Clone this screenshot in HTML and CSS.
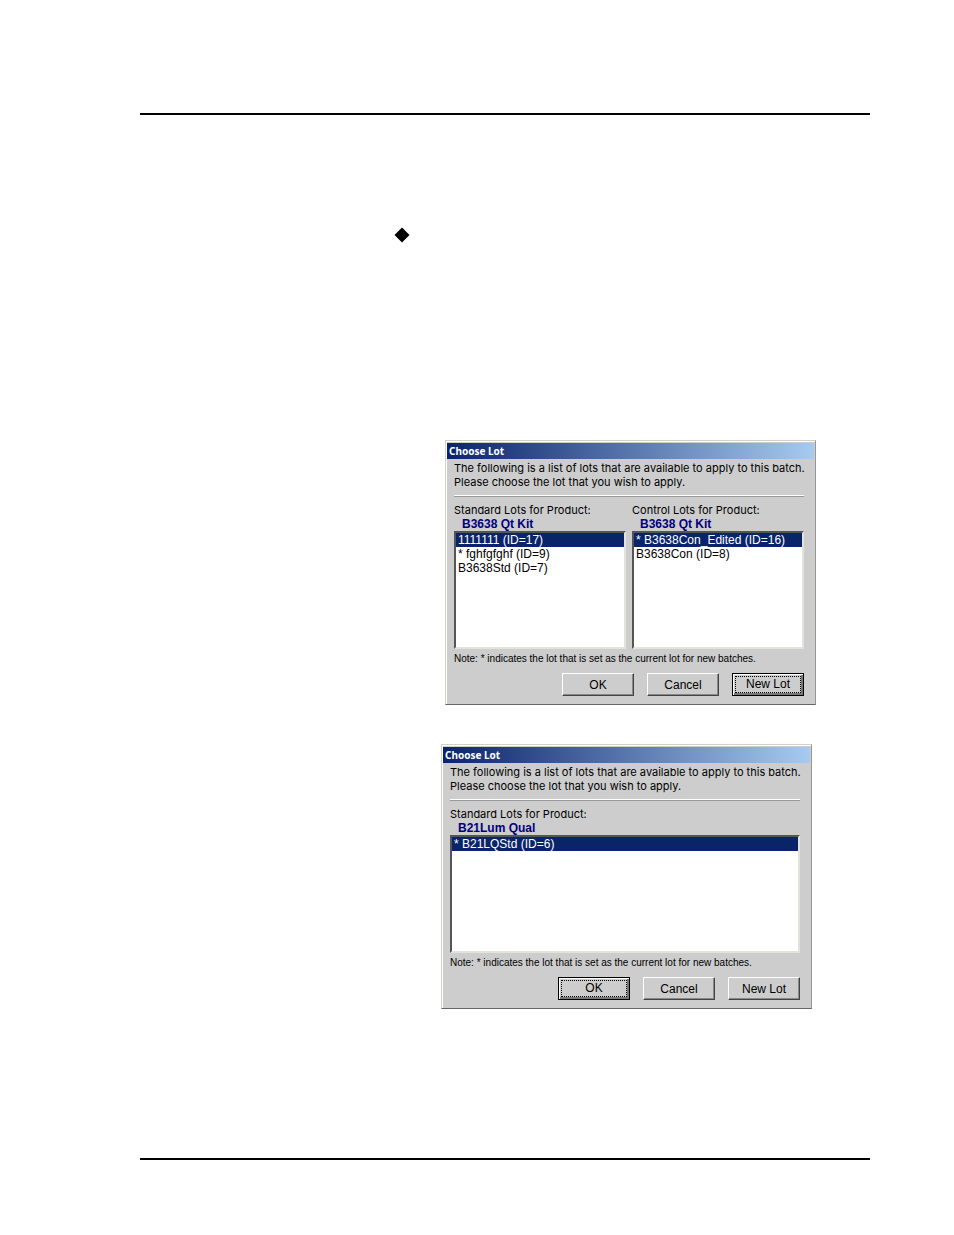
FILE: index.html
```
<!DOCTYPE html>
<html lang="en">
<head>
    <meta charset="UTF-8">
    <meta name="viewport" content="width=device-width, initial-scale=1.0">
    <title>Choose Lot</title>
    <link rel="stylesheet" href="styles.css">
</head>
<body>

<main class="page">
    <div class="bullet">
        <svg width="16" height="16" viewBox="0 0 16 16" aria-hidden="true">
            <path d="M8 0.5 L15.5 8 L8 15.5 L0.5 8 Z" fill="#000"/>
        </svg>
    </div>

    <section class="dialog">
        <h2 class="title">Choose Lot</h2>
        <div class="content">
            <p class="intro">The following is a list of lots that are available to apply to this batch.<br>Please choose the lot that you wish to apply.</p>
            <hr>
            <div class="lists">
                <div class="lot">
                    <label for="standard">Standard Lots for Product: <b>B3638 Qt Kit</b></label>
                    <select id="standard" size="8">
                        <option selected>1111111 (ID=17)</option>
                        <option>* fghfgfghf (ID=9)</option>
                        <option>B3638Std (ID=7)</option>
                    </select>
                </div>
                <div class="lot">
                    <label for="control">Control Lots for Product: <b>B3638 Qt Kit</b></label>
                    <select id="control" size="8">
                        <option selected>* B3638Con_Edited (ID=16)</option>
                        <option>B3638Con (ID=8)</option>
                    </select>
                </div>
            </div>
            <p class="note">Note: * indicates the lot that is set as the current lot for new batches.</p>
            <div class="buttons">
                <button type="button">OK</button>
                <button type="button">Cancel</button>
                <button type="button" class="default"><span>New Lot</span></button>
            </div>
        </div>
    </section>

    <section class="dialog second">
        <h2 class="title">Choose Lot</h2>
        <div class="content">
            <p class="intro">The following is a list of lots that are available to apply to this batch.<br>Please choose the lot that you wish to apply.</p>
            <hr>
            <div class="lists">
                <div class="lot">
                    <label for="qual">Standard Lots for Product: <b>B21Lum Qual</b></label>
                    <select id="qual" size="8">
                        <option selected>* B21LQStd (ID=6)</option>
                    </select>
                </div>
            </div>
            <p class="note">Note: * indicates the lot that is set as the current lot for new batches.</p>
            <div class="buttons">
                <button type="button" class="default"><span>OK</span></button>
                <button type="button">Cancel</button>
                <button type="button">New Lot</button>
            </div>
        </div>
    </section>
</main>

</body>
</html>
```

FILE: styles.css
```
* {
    box-sizing: border-box;
}
body {
    margin: 0;
    padding: 113px 84px 75px 140px;
    min-height: 100vh;
    display: flex;
    background: #fff;
    color: #000;
    font-family: "Liberation Sans", Arial, sans-serif;
    font-size: 12px;
    line-height: 14px;
}
.page {
    flex: 1;
    border-top: 2px solid #000;
    border-bottom: 2px solid #000;
    padding: 112px 54px 0 254px;
}
.bullet {
    height: 213px;
}
.bullet svg {
    display: block;
}
.dialog {
    width: 371px;
    max-width: 100%;
    margin-left: auto;
    padding: 1px;
    background: #cdcdcd;
    border: 1px solid;
    border-color: #d4d0c8 #99968f #666 #d4d0c8;
    box-shadow: inset 1px 1px 0 #fff;
}
.second {
    margin: 39px 4px 0 auto;
}
.title {
    margin: 1px 0 0;
    padding-left: 2px;
    height: 16px;
    background: linear-gradient(to right, #0a246a, #a6caf0);
    color: #fff;
    font: bold 10px/16px "Noto Sans", Tahoma, sans-serif;
}
.content {
    padding: 2px 10px 7px 7px;
}
p {
    margin: 0;
}
.intro,
label {
    font-family: Inter, Arial, sans-serif;
    font-size: 11px;
}
.intro {
    white-space: nowrap;
}
hr {
    height: 2px;
    margin: 6px 0;
    border: 0;
    border-top: 1px solid #fff;
    border-bottom: 1px solid #999;
}
.lists {
    display: flex;
    gap: 6px;
}
.lot {
    flex: 1;
    min-width: 0;
}
label,
label b {
    display: block;
}
label b {
    padding-left: 8px;
    color: #000080;
    font-family: "Liberation Sans", Arial, sans-serif;
    font-size: 12px;
}
select {
    display: block;
    width: 100%;
    height: 118px;
    padding: 0;
    background: #fff;
    border: 2px solid;
    border-color: #555 #e4e2dc #e4e2dc #555;
    border-radius: 0;
    outline: none;
    overflow: hidden;
    font: inherit;
    font-family: "Liberation Sans", Arial, sans-serif;
    color: #000;
}
option {
    height: 14px;
    min-height: 14px;
    padding: 0 2px;
    line-height: 14px;
    color: #000;
}
option:checked {
    background: #0a246a linear-gradient(#0a246a, #0a246a);
    color: #fff;
    -webkit-text-fill-color: #fff;
}
.note {
    padding: 3px 0 7px;
    font-size: 10px;
}
.buttons {
    display: flex;
    justify-content: flex-end;
    gap: 13px;
}
button {
    width: 72px;
    height: 23px;
    padding: 0;
    background: #cdcdcd;
    border: 1px solid;
    border-color: #fff #444 #444 #fff;
    border-radius: 0;
    box-shadow: inset -1px -1px 0 #888;
    font: inherit;
    color: #000;
}
button.default {
    padding: 2px;
    border-color: #000;
    box-shadow: inset 1px 1px 0 #fff, inset -2px -2px 0 #777;
}
.default span {
    display: block;
    border: 1px dotted #000;
    line-height: 15px;
}
```
